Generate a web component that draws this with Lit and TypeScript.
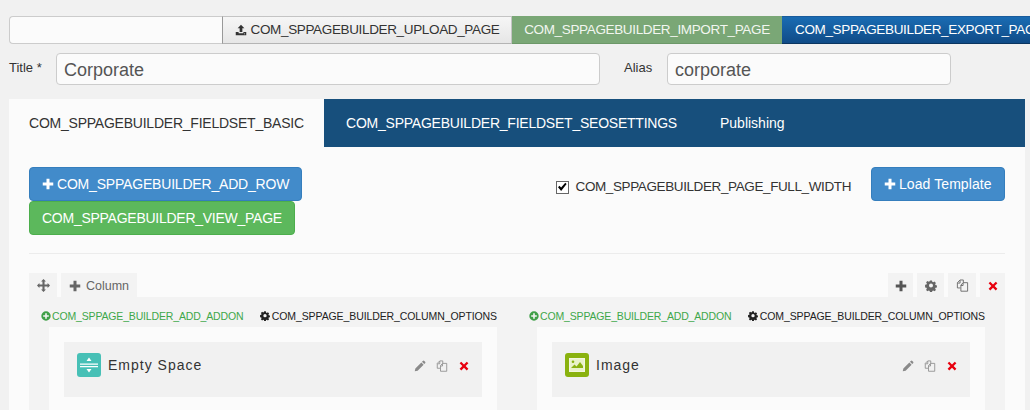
import { LitElement, html, css, svg } from 'lit';
import { customElement } from 'lit/decorators.js';

const plus = svg`<path d="M6 1h4v5h5v4h-5v5H6v-5H1V6h5z"/>`;
const gear = svg`<path fill-rule="evenodd" d="M6.6 1h2.8l.4 2 1.3.6 1.8-1.1 2 2-1.1 1.8.5 1.3 2 .4v2.8l-2 .4-.5 1.3 1.1 1.8-2 2-1.8-1.1-1.3.5-.4 2H6.6l-.4-2-1.3-.5-1.8 1.1-2-2 1.1-1.8-.5-1.3-2-.4V7.200l2-.4.5-1.300-1.100-1.800 2-2 1.800 1.100 1.300-.6zM8 5.500a2.800 2.800 0 1 0 0 5.600 2.800 2.800 0 0 0 0-5.600z" transform="translate(.4 -.4) scale(.95)"/>`;
const cross = svg`<path d="M3.600 1 8 5.400 12.400 1 15 3.600 10.600 8l4.400 4.400-2.600 2.600L8 10.600 3.600 15 1 12.400 5.400 8 1 3.600z"/>`;
const copy = svg`<path fill="none" stroke="currentColor" stroke-width="1.100" d="M5.500 11H1.700V4.500L5 1.200h4v3M6 15V7.500l2.700-3h5.600V15zM5 1.500V5H2M8.700 4.800V8H6"/>`;
const pencil = svg`<path d="M11.800 1.200a1.400 1.400 0 0 1 2 0l1 1a1.400 1.400 0 0 1 0 2L13.600 5.400l-3-3zM9.800 3.200l3 3-8 8L1 15l.8-3.800z"/>`;
const move = svg`<path d="M8 0l3 3H9.300v3.700H13V5l3 3-3 3V9.300H9.300V13H11l-3 3-3-3h1.700V9.300H3V11L0 8l3-3v1.700h3.700V3H5z"/>`;
const upload = svg`<path d="M8 1l4.500 4.700H9.800v5H6.200v-5H3.500zM1 10.500h3.800v1.800h6.400v-1.800H15V15H1zM12 12.600h1.300v1.200H12z" fill-rule="evenodd"/>`;
const plusCircle = svg`<path fill-rule="evenodd" d="M8 .5a7.500 7.500 0 1 1 0 15 7.500 7.500 0 0 1 0-15zM6.700 3.500v3.200H3.500v2.600h3.200v3.200h2.600V9.300h3.200V6.700H9.300V3.500z"/>`;
const tick = svg`<path d="M1.500 7.500 3.500 5.500 6 8 12 1l2 2-8 10z"/>`;

const icon = (body: unknown, cls = '') =>
  html`<svg class="ico ${cls}" viewBox="0 0 16 16" fill="currentColor">${body}</svg>`;

@customElement('app-root')
export class AppRoot extends LitElement {
  static override styles = css`
    :host {
      display: block;
      width: 1030px;
      height: 410px;
      overflow: hidden;
      background: #f1f1f1;
      font-family: 'Liberation Sans', Arial, sans-serif;
      font-size: 14px;
      color: #333;
    }
    * { box-sizing: border-box; }
    .ico { width: 1em; height: 1em; flex: none; }
    .caps { letter-spacing: -0.23px; }
    .add-row { letter-spacing: -0.19px; }
    .view-page { letter-spacing: -0.26px; }

    .file-row {
      display: flex;
      width: 1100px;
      height: 28px;
      margin: 16px 0 0 9px;
      font-size: 13.5px;
      letter-spacing: -0.35px;
      white-space: nowrap;
      line-height: 26px;
    }
    .file-name {
      width: 213px;
      background: #fbfbfb;
      border: 1px solid #ccc;
      border-right: 0;
      border-radius: 4px 0 0 4px;
    }
    .upload, .import, .export {
      display: flex;
      align-items: center;
      justify-content: center;
      height: 28px;
    }
    .upload {
      width: 290px;
      gap: 4px;
      color: #333;
      background: linear-gradient(#f6f6f6, #e6e6e6);
      border: 1px solid #c4c4c4;
      border-left-color: #999;
      border-bottom-color: #b4b4b4;
    }
    .upload .ico { font-size: 12px; color: #333; }
    .import {
      width: 270px;
      color: #f2f6f0;
      background: #7aa776;
      border-bottom: 1px solid #6c9868;
    }
    .export {
      width: 264px;
      padding-left: 13px;
      justify-content: flex-start;
      color: #fff;
      background: linear-gradient(#1a6cb3, #104b87);
      border-top: 1px solid #1a5c9c;
      border-bottom: 1px solid #0b3560;
    }

    .meta-row {
      display: flex;
      align-items: flex-start;
      height: 32px;
      margin: 9px 0 0 9px;
    }
    .meta-row label { padding-top: 7px; font-size: 13px; line-height: 16px; color: #333; }
    .title-label { width: 47px; }
    .alias-label { width: 43px; margin-left: 24px; }
    .field {
      display: flex;
      align-items: center;
      height: 32px;
      padding: 2px 7px 0;
      font-size: 18px;
      color: #555;
      background: #fbfbfb;
      border: 1px solid #ccc;
      border-radius: 4px;
    }
    .field.title { width: 544px; }
    .field.alias { width: 284px; }

    .panel {
      width: 1016px;
      margin: 14px 0 0 9px;
      background: #fbfbfb;
    }
    .tabs {
      display: flex;
      height: 48px;
      background: #174f7c;
      color: #fff;
    }
    .tab {
      display: flex;
      align-items: center;
      padding: 0 21px;
    }
    .tab.seo { padding: 0 22px; }
    .tab.active {
      width: 315px;
      padding: 0 20px;
      color: #333;
      background: #fbfbfb;
    }

    .content { padding: 20px 20px 0; }
    .toolbar {
      display: flex;
      justify-content: space-between;
      align-items: flex-start;
      height: 87px;
      border-bottom: 1px solid #ececec;
    }
    .left-btns { display: flex; flex-direction: column; align-items: flex-start; }
    .right-tools { display: flex; align-items: flex-start; }
    .btn {
      display: flex;
      align-items: center;
      gap: 3px;
      height: 34px;
      padding: 0 12px;
      color: #fff;
      border: 1px solid;
      border-radius: 4px;
      white-space: nowrap;
    }
    .btn .ico { font-size: 12px; }
    .btn.blue { background: #428bca; border-color: #357ebd; }
    .btn.green { background: #5cb85c; border-color: #4cae4c; }
    .btn.load { width: 134px; letter-spacing: 0.08px; }
    .check {
      display: flex;
      align-items: center;
      height: 14px;
      margin: 12px 20px 0 0;
      gap: 7px;
      font-size: 13.5px;
      letter-spacing: -0.39px;
    }
    .box {
      display: flex;
      align-items: center;
      justify-content: center;
      width: 13px;
      height: 13px;
      margin-top: 2px;
      color: #000;
      background: #fff;
      border: 1px solid #666;
    }
    .box .ico { font-size: 11px; }

    .row-head {
      display: flex;
      justify-content: space-between;
      height: 24px;
      margin-top: 19px;
    }
    .row-head > div { display: flex; }
    .left-tools { gap: 4px; }
    .right-acts { gap: 4px; }
    .htab {
      display: flex;
      align-items: center;
      justify-content: center;
      height: 24px;
      padding-top: 1px;
      font-size: 12.5px;
      color: #666;
      background: #f3f3f3;
    }
    .htab .ico { font-size: 12px; }
    .htab.col { width: 76px; gap: 5px; }
    .htab.plus { width: 25px; color: #555; }
    .htab.gear { width: 27px; }
    .htab.copy { width: 28px; }
    .htab.copy .ico { font-size: 13px; }
    .htab.del { width: 25px; color: #e8000e; }
    .htab.del .ico { font-size: 10px; }
    .htab.move { width: 28px; }
    .htab.move .ico { font-size: 13px; }

    .row-body {
      display: grid;
      grid-template-columns: minmax(0, 1fr) minmax(0, 1fr);
      gap: 40px;
      height: 120px;
      padding: 12px 20px 0;
      background: #f3f3f3;
    }
    .col-links {
      display: flex;
      justify-content: space-between;
      height: 18px;
      margin-left: -8px;
      font-size: 10.5px;
      letter-spacing: -0.16px;
      line-height: 14px;
      white-space: nowrap;
    }
    .col-links span { display: flex; gap: 1px; }
    .col-links .ico { font-size: 10px; margin-top: 2px; }
    .add-addon { color: #3ea74a; }
    .add-addon .ico { color: #3f9f47; }
    .col-opts { color: #222; letter-spacing: -0.1px; }
    .col-opts .ico { color: #222; }
    .col-links .col-opts { gap: 2px; }

    .col-inner {
      height: 100px;
      padding: 15px;
      background: #fbfbfb;
    }
    .addon {
      display: flex;
      align-items: flex-start;
      height: 55px;
      padding: 11px 13px;
      background: #f1f1f1;
    }
    .addon-icon {
      display: flex;
      align-items: center;
      justify-content: center;
      width: 24px;
      height: 24px;
      margin-right: 7px;
      border-radius: 3px;
    }
    .addon-icon.teal { background: #47c0b6; }
    .addon-icon.olive { background: #8ab20f; }
    .addon-name {
      flex: 1;
      padding-top: 1px;
      line-height: 22px;
      letter-spacing: 1px;
      color: #333;
    }
    .addon-acts {
      display: flex;
      gap: 10px;
      padding-top: 7px;
      color: #8a8a8a;
      font-size: 12px;
    }
    .addon-acts .x { color: #e8000e; font-size: 10px; margin: 1px 0 0 1px; }
  `;

  private renderColumn(name: string, tone: string, glyph: unknown) {
    return html`
      <div>
        <div class="col-links">
          <span class="add-addon">${icon(plusCircle)}COM_SPPAGE_BUILDER_ADD_ADDON</span>
          <span class="col-opts">${icon(gear)}COM_SPPAGE_BUILDER_COLUMN_OPTIONS</span>
        </div>
        <div class="col-inner">
          <div class="addon">
            <div class="addon-icon ${tone}">${glyph}</div>
            <div class="addon-name">${name}</div>
            <div class="addon-acts">
              ${icon(pencil)}${icon(copy)}${icon(cross, 'x')}
            </div>
          </div>
        </div>
      </div>
    `;
  }

  override render() {
    const spaceGlyph = html`<svg width="18" height="18" viewBox="0 0 18 18" fill="#fff">
      <path d="M0 7.500h18v1.200H0zM0 10h18v1.200H0zM9 1.500l2.500 3.500h-5zM9 16.500 6.500 13h5z" />
    </svg>`;
    const imageGlyph = html`<svg width="16" height="14" viewBox="0 0 16 14">
      <rect x=".6" y=".6" width="14.800" height="12.800" fill="#e9f2c8" stroke="#f3f7df" stroke-width="1.200" />
      <path d="M2 10l3.500-3.500 2 2L11 4l3 4v2z" fill="#8ab20f" />
      <circle cx="4" cy="3.800" r="1.300" fill="#8ab20f" />
    </svg>`;
    return html`
      <div class="file-row">
        <div class="file-name"></div>
        <div class="upload">${icon(upload)}COM_SPPAGEBUILDER_UPLOAD_PAGE</div>
        <div class="import">COM_SPPAGEBUILDER_IMPORT_PAGE</div>
        <div class="export">COM_SPPAGEBUILDER_EXPORT_PAGE</div>
      </div>

      <div class="meta-row">
        <label class="title-label">Title *</label>
        <div class="field title">Corporate</div>
        <label class="alias-label">Alias</label>
        <div class="field alias">corporate</div>
      </div>

      <div class="panel">
        <div class="tabs">
          <div class="tab active caps">COM_SPPAGEBUILDER_FIELDSET_BASIC</div>
          <div class="tab seo caps">COM_SPPAGEBUILDER_FIELDSET_SEOSETTINGS</div>
          <div class="tab">Publishing</div>
        </div>

        <div class="content">
          <div class="toolbar">
            <div class="left-btns">
              <div class="btn blue add-row">${icon(plus)}COM_SPPAGEBUILDER_ADD_ROW</div>
              <div class="btn green view-page">COM_SPPAGEBUILDER_VIEW_PAGE</div>
            </div>
            <div class="right-tools">
              <label class="check">
                <span class="box">${icon(tick)}</span>COM_SPPAGEBUILDER_PAGE_FULL_WIDTH
              </label>
              <div class="btn blue load">${icon(plus)}Load Template</div>
            </div>
          </div>

          <div class="row-head">
            <div class="left-tools">
              <div class="htab move">${icon(move)}</div>
              <div class="htab col">${icon(plus)}Column</div>
            </div>
            <div class="right-acts">
              <div class="htab plus">${icon(plus)}</div>
              <div class="htab gear">${icon(gear)}</div>
              <div class="htab copy">${icon(copy)}</div>
              <div class="htab del">${icon(cross)}</div>
            </div>
          </div>
          <div class="row-body">
            ${this.renderColumn('Empty Space', 'teal', spaceGlyph)}
            ${this.renderColumn('Image', 'olive', imageGlyph)}
          </div>
        </div>
      </div>
    `;
  }
}

declare global {
  interface HTMLElementTagNameMap {
    'app-root': AppRoot;
  }
}
